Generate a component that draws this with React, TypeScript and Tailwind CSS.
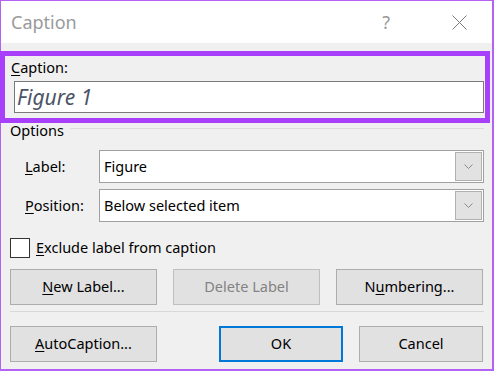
import React from 'react';

const font = { fontFamily: '"Noto Sans", "Open Sans", sans-serif' };

function Mn({ children }: { children: React.ReactNode }) {
  return <span className="underline underline-offset-2 decoration-1">{children}</span>;
}

function Combo({ value }: { value: string }) {
  return (
    <div className="flex-1 h-[33px] bg-white border border-[#a0a0a0] flex items-center pl-[4px] pr-[1px]">
      <span className="flex-1 text-[14.5px] text-black">{value}</span>
      <div className="w-[27px] h-[29px] bg-[#e2e2e2] border border-[#b0b0b0] flex items-center justify-center">
        <svg width="9" height="5" viewBox="0 0 9 5">
          <path d="M0.5 0.5 L4.5 4.5 L8.5 0.5" fill="none" stroke="#8a8a8a" strokeWidth="1" />
        </svg>
      </div>
    </div>
  );
}

function Btn({
  children,
  width,
  disabled,
  primary,
}: {
  children: React.ReactNode;
  width: string;
  disabled?: boolean;
  primary?: boolean;
}) {
  const border = primary
    ? 'border-2 border-[#0078d7]'
    : disabled
      ? 'border border-[#bfbfbf]'
      : 'border border-[#adadad]';
  return (
    <div
      className={`${width} h-[36px] bg-[#e1e1e1] ${border} flex items-center justify-center text-[14.5px] ${
        disabled ? 'text-[#838383]' : 'text-black'
      }`}
    >
      {children}
    </div>
  );
}

export default function App() {
  return (
    <div style={font} className="w-[494px] h-[371px] border-l border-t border-r-2 border-b-2 border-[#b362f5] flex flex-col bg-[#f0f0f0]">
      {/* Title bar */}
      <div className="h-[42px] bg-white flex items-center pl-[10px] pr-[25px] shrink-0">
        <span className="flex-1 text-[18px] text-[#9a9a9a]">Caption</span>
        <span className="text-[18px] text-[#9a9a9a] mr-[62px]">?</span>
        <svg width="15" height="15" viewBox="0 0 15 15">
          <path d="M0.5 0.5 L14.5 14.5 M14.5 0.5 L0.5 14.5" stroke="#7a7a7a" strokeWidth="1" />
        </svg>
      </div>

      {/* Body */}
      <div className="flex-1 flex flex-col pt-[8px]">
        {/* Highlighted caption field */}
        <div className="-ml-px mr-[2px] h-[72px] border-[5px] border-[#a83ffa] flex flex-col pl-[6px] pr-[1px]">
          <div className="h-[20px] text-[14.5px] text-black leading-[20px] mt-[1px]">
            <Mn>C</Mn>aption:
          </div>
          <div className="mt-[4px] ml-[3px] h-[32px] bg-white border border-[#7a7a7a] flex items-center pl-[2px]">
            <span className="text-[21px] italic text-[#4b5466] leading-none">Figure 1</span>
          </div>
        </div>

        {/* Options group */}
        <div className="h-[14px] flex items-start pl-[9px] pr-[8px]">
          <span className="text-[14.5px] leading-[14px] text-black">Options</span>
          <div className="flex-1 h-px bg-[#dcdcdc] mt-[5px] ml-[6px]" />
        </div>

        <div className="mt-[13px] flex items-center pl-[24px] pr-[8px]">
          <span className="w-[74px] text-[14.5px] text-black">
            <Mn>L</Mn>abel:
          </span>
          <Combo value="Figure" />
        </div>
        <div className="mt-[6px] flex items-center pl-[24px] pr-[8px]">
          <span className="w-[74px] text-[14.5px] text-black">
            <Mn>P</Mn>osition:
          </span>
          <Combo value="Below selected item" />
        </div>

        <div className="mt-[15px] flex items-center pl-[9px]">
          <div className="w-[20px] h-[20px] bg-white border border-[#333333]" />
          <span className="ml-[6px] text-[14.5px] text-black">
            <Mn>E</Mn>xclude label from caption
          </span>
        </div>

        <div className="mt-[10px] flex gap-[16px] pl-[9px] pr-[8px]">
          <Btn width="w-[147px]">
            <Mn>N</Mn>ew Label...
          </Btn>
          <Btn width="w-[147px]" disabled>
            Delete Label
          </Btn>
          <Btn width="w-[147px]">
            N<Mn>u</Mn>mbering...
          </Btn>
        </div>

        <div className="mt-[6px] ml-[9px] mr-[8px] h-px bg-[#d8d8d8]" />

        <div className="mt-[14px] flex pl-[9px] pr-[8px]">
          <Btn width="w-[147px]">
            <Mn>A</Mn>utoCaption...
          </Btn>
          <div className="ml-[62px]">
            <Btn width="w-[124px]" primary>
              OK
            </Btn>
          </div>
          <div className="ml-[16px]">
            <Btn width="w-[124px]">Cancel</Btn>
          </div>
        </div>
      </div>
    </div>
  );
}
